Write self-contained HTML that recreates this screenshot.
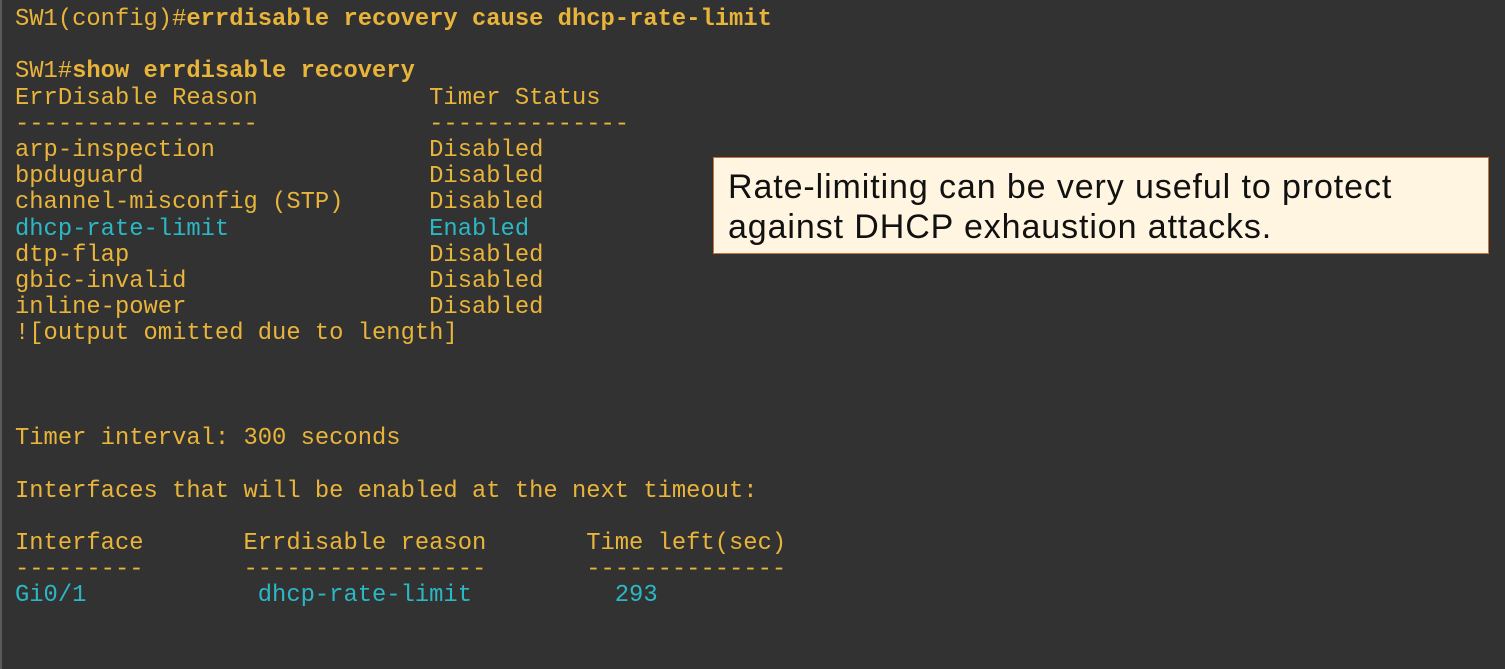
<!DOCTYPE html>
<html><head><meta charset="utf-8"><style>
html,body{margin:0;padding:0;}
body{width:1505px;height:669px;background:#323232;position:relative;overflow:hidden;}
.edge{position:absolute;left:0;top:0;width:2px;height:669px;background:#5a5a5a;}
pre{position:absolute;left:15px;top:7px;margin:0;font-family:"Liberation Mono","DejaVu Sans Mono",monospace;font-size:23.8px;line-height:26.2px;color:#e9b43a;}
b{font-weight:bold;}
.c{color:#2bb8c6;}
.box{position:absolute;left:713px;top:157px;width:776px;height:97px;background:#fff5e0;border:1px solid #c9733a;box-sizing:border-box;}
.box div{position:absolute;left:14px;top:9px;font-family:"Liberation Sans",Arial,sans-serif;font-size:34px;line-height:40px;color:#111;white-space:nowrap;letter-spacing:0.9px;}
</style></head><body>
<div class="edge"></div>
<pre>SW1(config)#<b>errdisable recovery cause dhcp-rate-limit</b>

SW1#<b>show errdisable recovery</b>
ErrDisable Reason            Timer Status
-----------------            --------------
arp-inspection               Disabled
bpduguard                    Disabled
channel-misconfig (STP)      Disabled
<span class="c">dhcp-rate-limit              Enabled</span>
dtp-flap                     Disabled
gbic-invalid                 Disabled
inline-power                 Disabled
![output omitted due to length]



Timer interval: 300 seconds

Interfaces that will be enabled at the next timeout:

Interface       Errdisable reason       Time left(sec)
---------       -----------------       --------------
<span class="c">Gi0/1            dhcp-rate-limit          293</span>
</pre>
<div class="box"><div>Rate-limiting can be very useful to protect<br>against DHCP exhaustion attacks.</div></div>
</body></html>
